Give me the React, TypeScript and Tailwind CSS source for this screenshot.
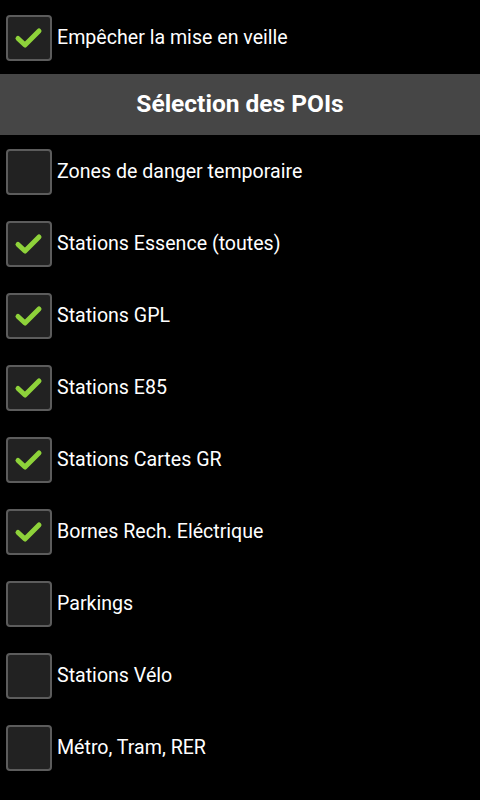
import React from 'react';

const items: { label: string; checked: boolean }[] = [
    { label: 'Zones de danger temporaire', checked: false },
    { label: 'Stations Essence (toutes)', checked: true },
    { label: 'Stations GPL', checked: true },
    { label: 'Stations E85', checked: true },
    { label: 'Stations Cartes GR', checked: true },
    { label: 'Bornes Rech. Eléctrique', checked: true },
    { label: 'Parkings', checked: false },
    { label: 'Stations Vélo', checked: false },
    { label: 'Métro, Tram, RER', checked: false },
];

function CheckBox({ checked }: { checked: boolean }) {
    return (
        <div className="w-[46px] h-[46px] rounded-[4px] border-2 border-[#5c5c5c] bg-[#222222] flex items-center justify-center shrink-0">
            {checked && (
                <svg width="32" height="26" viewBox="0 0 32 26">
                    <path d="M5 13.5 L12 20 L26 6" fill="none" stroke="#8ed23a" strokeWidth="5" strokeLinecap="round" strokeLinejoin="round" />
                </svg>
            )}
        </div>
    );
}

function Row({ label, checked }: { label: string; checked: boolean }) {
    return (
        <div className="h-[72px] flex items-center pl-[6px] gap-[5px]">
            <CheckBox checked={checked} />
            <span className="text-[19.6px] text-white">{label}</span>
        </div>
    );
}

export default function App() {
    return (
        <div className="w-[480px] h-[800px] bg-black overflow-hidden" style={{ fontFamily: 'Roboto, sans-serif' }}>
            <div className="mt-[2px]">
                <Row label="Empêcher la mise en veille" checked={true} />
            </div>
            <div className="h-[61px] bg-[#464646] flex items-center justify-center">
                <span className="text-[24.5px] font-bold text-white">Sélection des POIs</span>
            </div>
            <div className="mt-[1px]">
                {items.map(item => (
                    <Row key={item.label} label={item.label} checked={item.checked} />
                ))}
            </div>
        </div>
    );
}
